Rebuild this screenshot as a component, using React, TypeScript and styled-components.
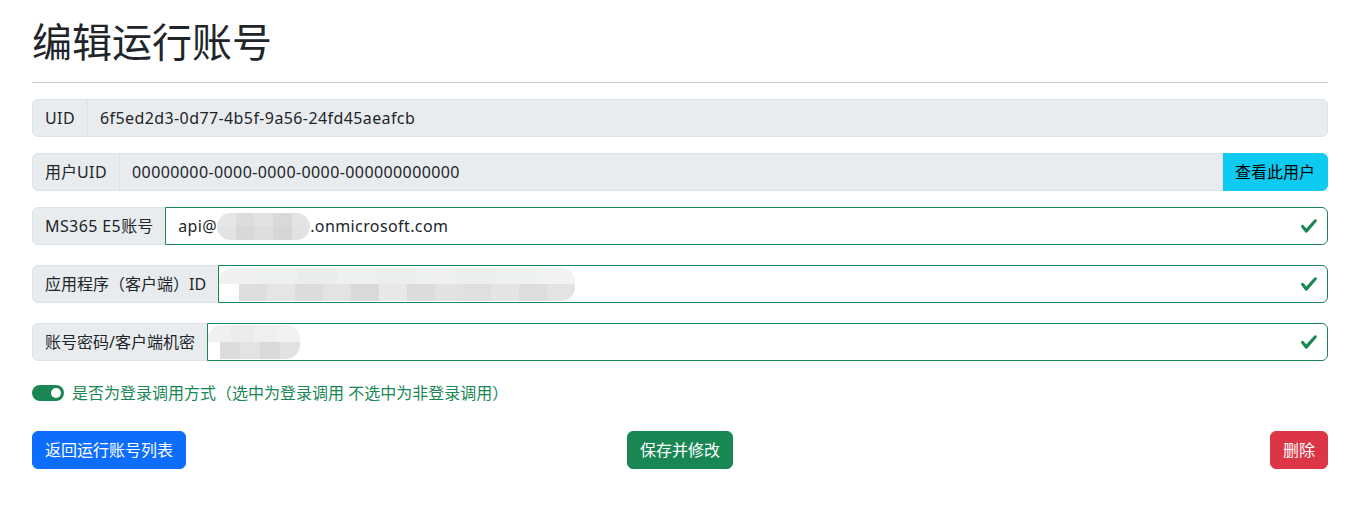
import React from "react";
import styled, { createGlobalStyle } from "styled-components";

const Global = createGlobalStyle`
  html, body { margin: 0; padding: 0; background: #fff; }
  body {
    font-family: "Noto Sans", "Noto Sans CJK SC", sans-serif;
    font-size: 16px;
    line-height: 1.5;
    color: #212529;
  }
  * { box-sizing: border-box; }
`;

const Page = styled.div`
  width: 1296px;
  margin-left: 32px;
  padding-top: 18px;
`;

const Title = styled.h1`
  margin: 0;
  font-size: 40px;
  font-weight: 400;
  line-height: 48px;
  color: #212529;
`;

const Rule = styled.hr`
  margin: 16px 0;
  border: 0;
  border-top: 1px solid #c8c9ca;
`;

const Group = styled.div<{ $mb: number }>`
  display: flex;
  align-items: stretch;
  height: 38px;
  margin-bottom: ${(p) => p.$mb}px;
`;

const Label = styled.span`
  display: flex;
  align-items: center;
  padding: 6px 12px;
  background: #e9ecef;
  border: 1px solid #dee2e6;
  border-radius: 6px 0 0 6px;
  white-space: nowrap;
  color: #212529;
`;

const Latin = styled.span`
  letter-spacing: 0.4px;
`;

const Field = styled.div<{ $valid?: boolean; $readonly?: boolean; $last?: boolean; $flush?: boolean }>`
  position: relative;
  flex: 1;
  display: flex;
  align-items: center;
  margin-left: -1px;
  padding: 6px ${(p) => (p.$valid ? "36px" : "12px")} 6px ${(p) => (p.$flush ? "0" : "12px")};
  background: ${(p) => (p.$readonly ? "#e9ecef" : "#fff")};
  border: 1px solid ${(p) => (p.$valid ? "#198754" : "#dee2e6")};
  border-radius: ${(p) => (p.$last ? "0 6px 6px 0" : "0")};
  white-space: nowrap;
  overflow: hidden;
`;

const Check = styled.svg`
  position: absolute;
  right: 9px;
  top: 50%;
  width: 18px;
  height: 18px;
  margin-top: -9px;
`;

const InfoButton = styled.button`
  margin-left: -1px;
  padding: 6px 12px;
  font: inherit;
  color: #000;
  background: #0dcaf0;
  border: 1px solid #0dcaf0;
  border-radius: 0 6px 6px 0;
`;

const Blur = styled.span<{ $w: number; $h: number }>`
  display: inline-block;
  position: relative;
  width: ${(p) => p.$w}px;
  height: ${(p) => p.$h}px;
  border-radius: 14px;
  overflow: hidden;
  filter: blur(0.6px);
  flex-shrink: 0;
`;

const BlurRow = styled.span<{ $bg: string; $inset: number }>`
  display: flex;
  height: 50%;
  margin-left: ${(p) => p.$inset}px;
  background: ${(p) => p.$bg};
`;

const Cell = styled.span<{ $c: string; $w: number }>`
  display: block;
  width: ${(p) => p.$w}px;
  height: 100%;
  background: ${(p) => p.$c};
`;

const SwitchRow = styled.div`
  display: flex;
  align-items: center;
  height: 24px;
  margin-bottom: 26px;
  color: #198754;
`;

const Switch = styled.span`
  position: relative;
  width: 32px;
  height: 16px;
  border-radius: 16px;
  background: #198754;
  margin-right: 8px;
  flex-shrink: 0;
  &::after {
    content: "";
    position: absolute;
    right: 3px;
    top: 3px;
    width: 10px;
    height: 10px;
    border-radius: 50%;
    background: #fff;
  }
`;

const Actions = styled.div`
  display: grid;
  grid-template-columns: 1fr auto 1fr;
  align-items: center;
`;

const Btn = styled.button<{ $bg: string; $align: string }>`
  justify-self: ${(p) => p.$align};
  padding: 6px 12px;
  font: inherit;
  line-height: 24px;
  color: #fff;
  background: ${(p) => p.$bg};
  border: 1px solid ${(p) => p.$bg};
  border-radius: 6px;
`;

const ValidIcon = () => (
  <Check viewBox="0 0 8 8">
    <path
      fill="#198754"
      d="M2.3 6.73.6 4.53c-.4-1.04.46-1.4 1.1-.8l1.1 1.4 3.4-3.8c.6-.63 1.6-.27 1.2.7l-4 4.6c-.43.5-.8.4-1.1.1z"
    />
  </Check>
);

const Redacted = ({
  w,
  h,
  top,
  bottom,
  inset,
}: {
  w: number;
  h: number;
  top: string[];
  bottom: string[];
  inset: number;
}) => {
  const cw = (w - inset) / bottom.length;
  const tw = w / top.length;
  return (
    <Blur $w={w} $h={h}>
      <BlurRow $bg="#eef1ef" $inset={0}>
        {top.map((c, i) => (
          <Cell key={i} $c={c} $w={tw} />
        ))}
      </BlurRow>
      <BlurRow $bg="#fff" $inset={inset}>
        {bottom.map((c, i) => (
          <Cell key={i} $c={c} $w={cw} />
        ))}
      </BlurRow>
    </Blur>
  );
};

export default function App() {
  return (
    <>
      <Global />
      <Page>
        <Title>编辑运行账号</Title>
        <Rule />
        <Group $mb={16}>
          <Label>
            <Latin>UID</Latin>
          </Label>
          <Field $readonly $last>
            <Latin>6f5ed2d3-0d77-4b5f-9a56-24fd45aeafcb</Latin>
          </Field>
        </Group>
        <Group $mb={16}>
          <Label>
            用户<Latin>UID</Latin>
          </Label>
          <Field $readonly>
            <Latin>00000000-0000-0000-0000-000000000000</Latin>
          </Field>
          <InfoButton>查看此用户</InfoButton>
        </Group>
        <Group $mb={20}>
          <Label>
            <Latin>MS365 E5</Latin>账号
          </Label>
          <Field $valid $last>
            <Latin>api@</Latin>
            <Redacted
              w={93}
              h={27}
              inset={0}
              top={["#e6e6e6", "#dcdcdc", "#e2e2e2", "#d9d9d9", "#e4e4e4"]}
              bottom={["#e3e3e3", "#d8d8d8", "#dedede", "#d6d6d6", "#e2e2e2"]}
            />
            <Latin>.onmicrosoft.com</Latin>
            <ValidIcon />
          </Field>
        </Group>
        <Group $mb={20}>
          <Label>应用程序（客户端）ID</Label>
          <Field $valid $last $flush>
            <Redacted
              w={356}
              h={33}
              inset={20}
              top={["#eef1ef", "#edf1ee", "#eaeeeb", "#eef2ef", "#ebefec", "#eef1ef", "#ecf0ed", "#eef2ef", "#f0f3f1"]}
              bottom={[
                "#dedede", "#e5e5e5", "#dcdcdc", "#e3e3e3", "#d9d9d9", "#e8e8e8",
                "#dcdcdc", "#e2e2e2", "#dfdfdf", "#e4e4e4", "#dddddd", "#e3e3e3",
              ]}
            />
            <ValidIcon />
          </Field>
        </Group>
        <Group $mb={20}>
          <Label>账号密码/客户端机密</Label>
          <Field $valid $last $flush>
            <Redacted
              w={92}
              h={34}
              inset={12}
              top={["#eef1ef", "#e9ecea", "#edf0ee", "#f0f3f1"]}
              bottom={["#dcdcdc", "#e3e3e3", "#dadada", "#e2e2e2"]}
            />
            <ValidIcon />
          </Field>
        </Group>
        <SwitchRow>
          <Switch />
          是否为登录调用方式（选中为登录调用 不选中为非登录调用）
        </SwitchRow>
        <Actions>
          <Btn $bg="#0d6efd" $align="start">返回运行账号列表</Btn>
          <Btn $bg="#198754" $align="center">保存并修改</Btn>
          <Btn $bg="#dc3545" $align="end">删除</Btn>
        </Actions>
      </Page>
    </>
  );
}
